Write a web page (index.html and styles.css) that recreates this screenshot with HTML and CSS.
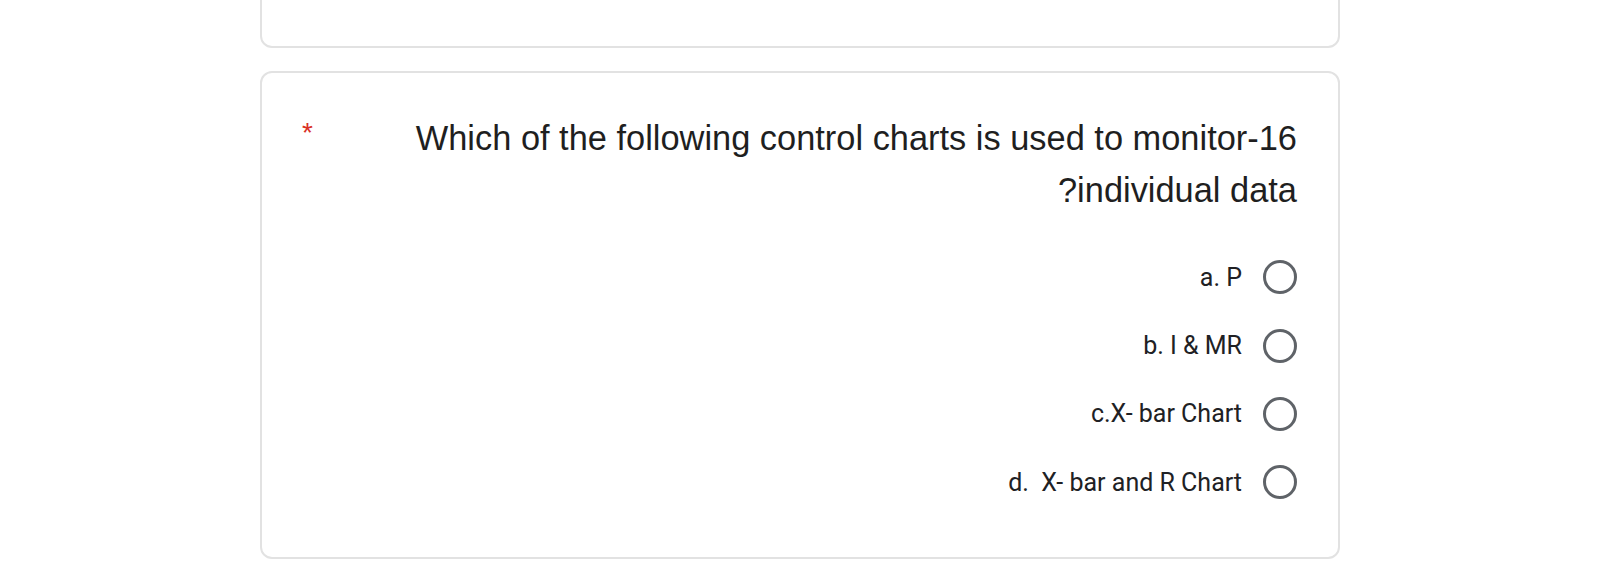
FILE: index.html
```html
<!DOCTYPE html>
<html lang="en">
<head>
<meta charset="utf-8">
<title>Form question</title>
<link rel="stylesheet" href="styles.css">
</head>
<body>
<main class="page">
  <section class="card card-prev"></section>
  <section class="card question" dir="rtl">
    <div class="title-row">
      <div class="title">16-Which of the following control charts is used to monitor individual data?</div>
      <span class="required">*</span>
    </div>
    <div class="options">
      <label class="option"><span class="radio"></span><span class="label">a. P</span></label>
      <label class="option"><span class="radio"></span><span class="label">b. I &amp; MR</span></label>
      <label class="option"><span class="radio"></span><span class="label">c.X- bar Chart</span></label>
      <label class="option"><span class="radio"></span><span class="label">d.&nbsp; X- bar and R Chart</span></label>
    </div>
  </section>
</main>
</body>
</html>
```
FILE: styles.css
```css
html, body {
  margin: 0;
  padding: 0;
  background: #ffffff;
  overflow: hidden;
}
.page {
  width: 1080px;
  margin: 0 0 0 260px;
  display: flex;
  flex-direction: column;
  gap: 23px;
}
.card {
  box-sizing: border-box;
  border: 2px solid #e2e2e2;
  border-radius: 12px;
  background: #fff;
}
.card-prev {
  height: 88px;
  margin-top: -40px;
}
.question {
  height: 488px;
  padding: 39px 41px 0 41px;
  display: flex;
  flex-direction: column;
}
.title-row {
  display: flex;
  align-items: flex-start;
}
.title {
  flex: 1;
  font-family: "Liberation Sans", Arial, sans-serif;
  font-size: 34.4px;
  line-height: 52px;
  color: #1f1f1f;
  text-align: right;
  padding-left: 60px;
}
.required {
  font-family: "Liberation Sans", Arial, sans-serif;
  color: #d93025;
  font-size: 28px;
  line-height: 28px;
  margin-top: 7px;
  margin-left: -1px;
}
.options {
  margin-top: 27px;
  display: flex;
  flex-direction: column;
}
.option {
  height: 68.4px;
  display: flex;
  align-items: center;
  gap: 21px;
}
.radio {
  box-sizing: border-box;
  width: 34px;
  height: 34px;
  border: 3px solid #5f6368;
  border-radius: 50%;
  flex: none;
}
.label {
  font-family: Roboto, "Liberation Sans", sans-serif;
  font-size: 25px;
  color: #202124;
}
```
